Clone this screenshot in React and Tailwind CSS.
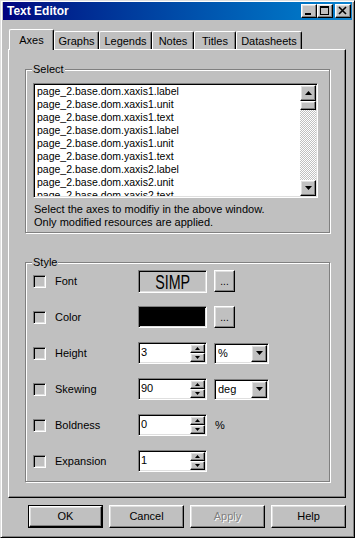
import React from 'react';

const raised =
  'border border-t-white border-l-white border-r-black border-b-black shadow-[inset_-1px_-1px_0_#808080,inset_1px_1px_0_#dfdfdf]';
const sunken =
  'border border-t-[#808080] border-l-[#808080] border-r-white border-b-white shadow-[inset_1px_1px_0_#000,inset_-1px_-1px_0_#dfdfdf]';

const items = [
  'page_2.base.dom.xaxis1.label',
  'page_2.base.dom.xaxis1.unit',
  'page_2.base.dom.xaxis1.text',
  'page_2.base.dom.yaxis1.label',
  'page_2.base.dom.yaxis1.unit',
  'page_2.base.dom.yaxis1.text',
  'page_2.base.dom.xaxis2.label',
  'page_2.base.dom.xaxis2.unit',
  'page_2.base.dom.xaxis2.text',
];

const tabs = [
  { name: 'Axes', w: 'w-[45px]' },
  { name: 'Graphs', w: 'w-[45px]' },
  { name: 'Legends', w: 'w-[53px]' },
  { name: 'Notes', w: 'w-[42px]' },
  { name: 'Titles', w: 'w-[42px]' },
  { name: 'Datasheets', w: 'w-[66px]' },
];

function Arrow({ dir = 'down', w = 7 }) {
  const h = Math.ceil(w / 2);
  const d =
    dir === 'up'
      ? `M0 ${h}L${w / 2} 0L${w} ${h}Z`
      : `M0 0L${w} 0L${w / 2} ${h}Z`;
  return (
    <svg width={w} height={h} viewBox={`0 0 ${w} ${h}`}>
      <path d={d} fill="#000" />
    </svg>
  );
}

function TitleButton({ children }) {
  return (
    <div className={`w-[16px] h-[14px] bg-[#c0c0c0] flex items-center justify-center ${raised}`}>
      {children}
    </div>
  );
}

function GroupBox({ title, className, children }) {
  return (
    <div
      className={`relative border border-[#808080] shadow-[inset_1px_1px_0_#fff,1px_1px_0_#fff] ${className}`}
    >
      <span className="absolute left-[6px] top-[-7px] bg-[#c0c0c0] px-[1px] leading-[13px]">
        {title}
      </span>
      {children}
    </div>
  );
}

function Checkbox() {
  return <div className={`w-[13px] h-[13px] shrink-0 bg-[#c0c0c0] ${sunken}`} />;
}

function Row({ label, children }) {
  return (
    <div className="flex items-center h-[22px]">
      <Checkbox />
      <span className="ml-[9px] w-[83px]">{label}</span>
      {children}
    </div>
  );
}

function SpinBox({ value }) {
  return (
    <div className={`w-[69px] h-[22px] bg-white p-[1px] flex ${sunken}`}>
      <span className="flex-1 pl-[1px] leading-[16px]">{value}</span>
      <div className="flex flex-col w-[15px]">
        <div className={`h-[9px] bg-[#c0c0c0] flex items-center justify-center ${raised}`}>
          <Arrow dir="up" w={5} />
        </div>
        <div className={`h-[9px] bg-[#c0c0c0] flex items-center justify-center ${raised}`}>
          <Arrow dir="down" w={5} />
        </div>
      </div>
    </div>
  );
}

function Dropdown({ value }) {
  return (
    <div className={`ml-[7px] w-[55px] h-[21px] bg-white p-[1px] flex ${sunken}`}>
      <span className="flex-1 pl-[2px] leading-[17px]">{value}</span>
      <div className={`w-[16px] bg-[#c0c0c0] flex items-center justify-center ${raised}`}>
        <Arrow />
      </div>
    </div>
  );
}

function DotsButton() {
  return (
    <div
      className={`ml-[7px] w-[21px] h-[22px] bg-[#c0c0c0] flex items-center justify-center leading-none ${raised}`}
    >
      <span className="text-[10px] pt-[2px]">...</span>
    </div>
  );
}

function Button({ label, isDefault, disabled }) {
  const base = 'w-[75px] h-[23px] bg-[#c0c0c0] flex items-center justify-center';
  const text = disabled ? (
    <span className="text-[#808080] [text-shadow:1px_1px_0_#fff]">{label}</span>
  ) : (
    <span>{label}</span>
  );
  if (isDefault) {
    return (
      <div className="w-[75px] h-[23px] border border-black">
        <div className={`w-full h-full bg-[#c0c0c0] flex items-center justify-center ${raised}`}>
          {text}
        </div>
      </div>
    );
  }
  return <div className={`${base} ${raised}`}>{text}</div>;
}

export default function App() {
  return (
    <div className="w-[355px] h-[538px] bg-[#c0c0c0] border border-t-[#dfdfdf] border-l-[#dfdfdf] border-r-black border-b-black shadow-[inset_1px_1px_0_#fff,inset_-1px_-1px_0_#808080] px-[2px] pt-[1px] flex flex-col font-['Liberation_Sans',Arial,sans-serif] text-[11px] text-black">
      {/* Title bar */}
      <div className="h-[18px] flex items-center bg-linear-to-r from-[#000080] to-[#1084d0] pl-[4px] pr-[1px]">
        <span className="flex-1 text-white font-bold text-[12px]">Text Editor</span>
        <TitleButton>
          <svg width="14" height="12" viewBox="0 0 14 12">
            <rect x="3" y="8" width="6" height="2" fill="#000" />
          </svg>
        </TitleButton>
        <TitleButton>
          <svg width="14" height="12" viewBox="0 0 14 12">
            <rect x="2.5" y="1.5" width="8" height="8" fill="none" stroke="#000" />
            <rect x="2" y="1" width="9" height="2" fill="#000" />
          </svg>
        </TitleButton>
        <div className="ml-[2px]">
          <TitleButton>
            <svg width="14" height="12" viewBox="0 0 14 12">
              <path d="M3 2L10 9M10 2L3 9" stroke="#000" strokeWidth="1.6" />
            </svg>
          </TitleButton>
        </div>
      </div>

      {/* Tabs */}
      <div className="mt-[9px] ml-[6px] h-[20px] flex items-end relative z-10">
        {tabs.map((t, i) =>
          i === 0 ? (
            <div
              key={t.name}
              className={`${t.w} h-[21px] -mb-[1px] bg-[#c0c0c0] border-t border-l border-r border-t-white border-l-white border-r-black rounded-t-[2px] shadow-[inset_-1px_0_0_#808080] flex items-center justify-center`}
            >
              {t.name}
            </div>
          ) : (
            <div
              key={t.name}
              className={`${t.w} h-[18px] bg-[#c0c0c0] border-t border-l border-r border-t-white border-l-white border-r-black rounded-t-[2px] shadow-[inset_-1px_0_0_#808080] flex items-center justify-center pt-[1px]`}
            >
              {t.name}
            </div>
          )
        )}
      </div>

      {/* Panel */}
      <div className="ml-[5px] w-[338px] border border-t-white border-l-white border-r-black border-b-black shadow-[inset_-1px_-1px_0_#808080] pt-[19px] pl-[16px] pb-[15px]">
        <GroupBox title="Select" className="w-[305px] pt-[13px] pl-[7px] pb-[3px]">
          <div className={`w-[285px] h-[115px] bg-white p-[1px] flex ${sunken}`}>
            <div className="flex-1 overflow-hidden pl-[2px] text-[10.5px]">
              {items.map((it) => (
                <div key={it} className="leading-[13px] whitespace-nowrap">
                  {it}
                </div>
              ))}
            </div>
            <div className="w-[16px] flex flex-col">
              <div className={`h-[16px] bg-[#c0c0c0] flex items-center justify-center ${raised}`}>
                <Arrow dir="up" />
              </div>
              <div className={`h-[9px] bg-[#c0c0c0] ${raised}`} />
              <div className="flex-1 bg-[image:repeating-conic-gradient(#c0c0c0_0%_25%,#ffffff_0%_50%)] bg-[length:2px_2px]" />
              <div className={`h-[16px] bg-[#c0c0c0] flex items-center justify-center ${raised}`}>
                <Arrow />
              </div>
            </div>
          </div>
          <div className="mt-[5px] ml-[1px] leading-[13px]">
            <div>Select the axes to modifiy in the above window.</div>
            <div>Only modified resources are applied.</div>
          </div>
        </GroupBox>

        <GroupBox title="Style" className="mt-[29px] w-[305px] pt-[7px] pl-[7px] pb-[9px]">
          <div className="flex flex-col gap-[14px]">
            <Row label="Font">
              <div className={`w-[69px] h-[23px] bg-[#c0c0c0] flex items-center justify-center overflow-hidden ${sunken}`}>
                <span className="text-[21px] leading-none scale-x-[0.68] inline-block">SIMP</span>
              </div>
              <DotsButton />
            </Row>
            <Row label="Color">
              <div className={`w-[69px] h-[22px] bg-black ${sunken}`} />
              <DotsButton />
            </Row>
            <Row label="Height">
              <SpinBox value="3" />
              <Dropdown value="%" />
            </Row>
            <Row label="Skewing">
              <SpinBox value="90" />
              <Dropdown value="deg" />
            </Row>
            <Row label="Boldness">
              <SpinBox value="0" />
              <span className="ml-[8px]">%</span>
            </Row>
            <Row label="Expansion">
              <SpinBox value="1" />
            </Row>
          </div>
        </GroupBox>
      </div>

      {/* Buttons */}
      <div className="mt-[7px] ml-[25px] flex gap-[6px]">
        <Button label="OK" isDefault />
        <Button label="Cancel" />
        <Button label="Apply" disabled />
        <Button label="Help" />
      </div>
    </div>
  );
}
